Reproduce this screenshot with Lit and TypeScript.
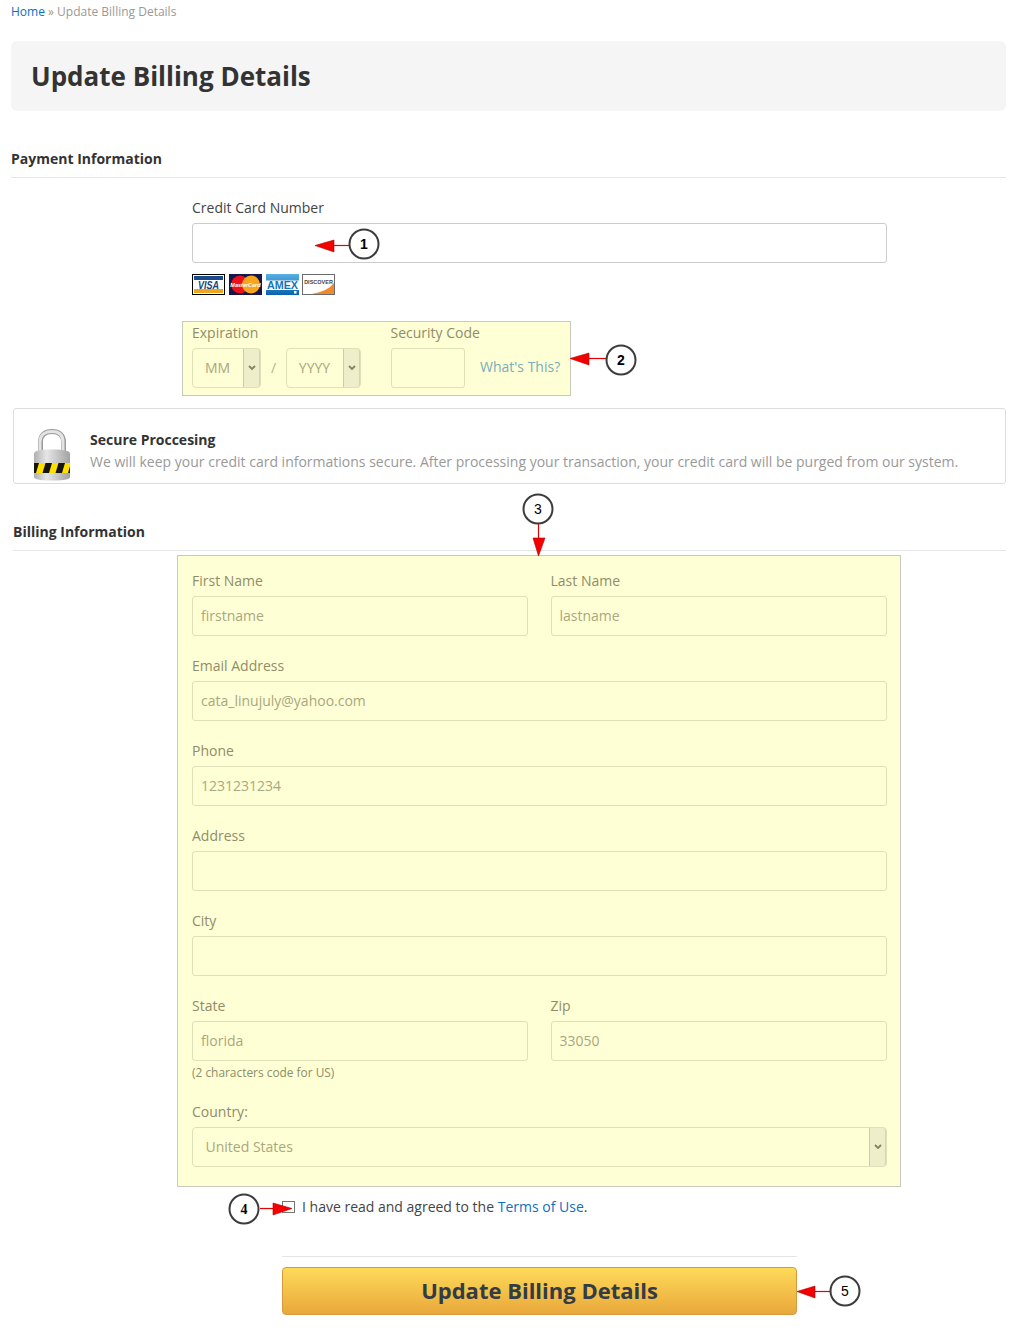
import { LitElement, html, css, svg } from "lit";
import { customElement } from "lit/decorators.js";

const chevron = html`<svg class="chev" width="8" height="6" viewBox="0 0 8 6"><path d="M1 1l3 3 3-3" fill="none" stroke="#85835a" stroke-width="1.800"/></svg>`;

const visa = html`<svg width="33" height="21" viewBox="0 0 33 21">
  <rect x="0.5" y="0.5" width="32" height="20" fill="#fff" stroke="#000"/>
  <rect x="2" y="2" width="29" height="4" fill="#1a4c8c"/>
  <rect x="2" y="15" width="29" height="4" fill="#f0a51e"/>
  <text x="16.5" y="14.500" text-anchor="middle" font-family="Liberation Sans" font-size="10.500" font-weight="700" font-style="italic" fill="#143f7c" textLength="21" lengthAdjust="spacingAndGlyphs">VISA</text>
</svg>`;
const master = html`<svg width="33" height="21" viewBox="0 0 33 21">
  <rect width="33" height="21" fill="#14174a"/>
  <circle cx="11" cy="10.5" r="9" fill="#e8111c"/>
  <circle cx="22" cy="10.5" r="9" fill="#f7a51c"/>
  <text x="16.5" y="12.500" text-anchor="middle" font-family="Liberation Sans" font-size="5.500" font-weight="700" font-style="italic" fill="#fff">MasterCard</text>
</svg>`;
const amex = html`<svg width="33" height="21" viewBox="0 0 33 21">
  <defs><linearGradient id="ax" x1="0" y1="0" x2="0" y2="1"><stop offset="0" stop-color="#58b0e4"/><stop offset="1" stop-color="#0a62ad"/></linearGradient></defs>
  <rect width="33" height="21" fill="url(#ax)"/>
  <rect y="6.500" width="33" height="9.500" fill="#fff"/>
  <text x="16.5" y="15" text-anchor="middle" font-family="Liberation Sans" font-size="11" font-weight="700" fill="#1673ba" textLength="31" lengthAdjust="spacingAndGlyphs">AMEX</text>
  <rect x="28" y="17" width="2.5" height="2.5" fill="#fff"/>
</svg>`;
const discover = html`<svg width="33" height="21" viewBox="0 0 33 21">
  <rect x="0.5" y="0.5" width="32" height="20" fill="#fff" stroke="#6b6b6b"/>
  <path d="M10 20 Q26 17 32 9 V20Z" fill="#f08a2c"/>
  <text x="16.5" y="10" text-anchor="middle" font-family="Liberation Sans" font-size="5.500" font-weight="700" fill="#444">DISCOVER</text>
</svg>`;

const lock = html`<svg width="38" height="52" viewBox="0 0 38 52">
  <defs>
    <linearGradient id="bd" x1="0" y1="0" x2="1" y2="0"><stop offset="0" stop-color="#b0b0b0"/><stop offset="0.35" stop-color="#e6e6e6"/><stop offset="1" stop-color="#a2a2a2"/></linearGradient>
    <clipPath id="bandclip"><rect x="1" y="34" width="36" height="10"/></clipPath>
  </defs>
  <path d="M7.500 26V13C7.500 6 12 2.500 19 2.500S30.500 6 30.500 13v13" fill="none" stroke="#9a9a9a" stroke-width="5"/>
  <path d="M7 26V13C7 6 12 2.500 19 2.500S30 6 30 13v13" fill="none" stroke="#e4e4e4" stroke-width="3"/>
  <path d="M1 25c0-3 4-4.500 18-4.500S37 22 37 25v23c0 2-4.500 3.500-18 3.500S1 50 1 48Z" fill="url(#bd)"/>
  <rect x="1" y="34" width="36" height="10" fill="#ffdf00"/>
  <g clip-path="url(#bandclip)" fill="#141414">
    <path d="M-3 44l3-10h6l-3 10Z"/><path d="M9.500 44l3-10h6.500l-3 10Z"/><path d="M22.500 44l3-10h6.500l-3 10Z"/><path d="M35 44l3-10h5l-3 10Z"/>
  </g>
</svg>`;

type Call = { cx: number; cy: number; n: string; cls: string; tri: string; line: [number, number, number, number] };
const calls: Call[] = [
  { cx: 364, cy: 244, n: "1", cls: "sans b", tri: "315,245.500 334,240 334,252", line: [334, 245.5, 349, 245.5] },
  { cx: 621, cy: 360, n: "2", cls: "sans b", tri: "570,358.500 589,353 589,365", line: [589, 358.5, 606, 358.5] },
  { cx: 538, cy: 509, n: "3", cls: "sans", tri: "538.500,556 533,538 545,538", line: [538.5, 524, 538.5, 538] },
  { cx: 244, cy: 1209, n: "4", cls: "serif b", tri: "292,1208.500 273,1203 273,1215", line: [260, 1208.5, 273, 1208.5] },
  { cx: 845, cy: 1291, n: "5", cls: "sans", tri: "797,1291.500 815,1286 815,1298", line: [815, 1291.5, 830, 1291.5] },
];

@customElement("app-root")
export class AppRoot extends LitElement {
  static styles = css`
    :host { display: block; position: relative; width: 1013px; height: 1330px; overflow: hidden; background: #fff; font-family: "Open Sans", sans-serif; font-size: 14px; color: #444; }
    * { box-sizing: border-box; }
    .page { padding: 0 7px 0 11px; }
    a { color: #0b6fc4; text-decoration: none; }
    .crumb { font-size: 12px; line-height: 24px; color: #999; }
    .title { margin: 17px 0 0; height: 70px; padding: 0 20px; background: #f5f5f5; border-radius: 6px; font-size: 26px; font-weight: 700; line-height: 71px; color: #333; }
    .legend { margin-top: 30px; height: 37px; line-height: 36px; font-size: 14px; font-weight: 700; color: #333; border-bottom: 1px solid #e5e5e5; }
    .legend.billing { margin-left: 2px; }
    .cc { margin: 20px 0 0 181px; width: 695px; }
    label, .lab { display: block; line-height: 20px; margin-bottom: 5px; }
    input { display: block; width: 100%; height: 40px; padding: 0 8px 2px; border: 1px solid #ccc; border-radius: 3px; background: transparent; font: 14px "Open Sans", sans-serif; color: #444; outline: none; }
    .cards { display: flex; gap: 4px; margin-top: 11px; height: 21px; }
    .cards svg { display: block; }
    .cards svg:nth-child(4) { margin-left: -1px; }

    .hl { background: #ffffd5; border: 1px solid #c9c9c0; }
    .hl label, .hl .lab { color: #8f8d6a; }
    .hl input, .hl .sel { border-color: #e0e0b8; color: #a9a780; }

    .exp { margin: 26px 0 0 171px; width: 389px; height: 75px; padding: 1px 9px 0; display: flex; }
    .exp .c1 { width: 198.500px; }
    .exp .row { display: flex; align-items: center; }
    .slash { width: 25px; text-align: center; color: #b5b38c; padding-bottom: 2px; }
    .sel { display: flex; height: 40px; border: 1px solid #e0e0b8; border-radius: 4px; }
    .sel .val { flex: 1; display: flex; align-items: center; padding-bottom: 2px; }
    .sel .btn { width: 17px; flex: none; display: flex; align-items: center; justify-content: center; background: #eeeecb; border-left: 1px solid #cfcda0; border-right: 1px solid #d6d6aa; border-radius: 0 3px 3px 0; }
    .chev { display: block; }
    .mm { width: 69px; }
    .mm .val, .yy .val { justify-content: center; padding-right: 1px; }
    .yy { width: 75px; }
    .csc { width: 74px; margin-left: 0.500px; }
    .exp .row2 { display: flex; align-items: center; gap: 15px; }
    .what { color: #78aebb; margin-bottom: 4px; }

    .secure { margin: 12px 0 0 2px; height: 76px; border: 1px solid #ddd; border-radius: 3px; display: flex; padding: 20px 0 0 19px; }
    .secure svg { display: block; flex: none; }
    .secure .txt { margin-left: 19px; }
    .secure .hd { font-weight: 700; color: #333; line-height: 22px; }
    .secure .ds { color: #999; line-height: 22px; white-space: nowrap; }

    .billform { margin: 4px 0 0 166px; width: 724px; height: 632px; padding: 15px 13px 0 14px; }
    .two { display: grid; grid-template-columns: 336px 336px; column-gap: 22.500px; }
    .f { margin-bottom: 20px; }
    .help { font-size: 11.900px; line-height: 20px; color: #8f8d6a; margin: 1px 0 20px; }
    .f.nomb { margin-bottom: 0; }
    .country .val { padding-left: 12.500px; }

    .terms { margin: 10px 0 0 271px; height: 20px; display: flex; align-items: center; gap: 7px; line-height: 20px; }
    .box { width: 13px; height: 12px; border: 1px solid #767676; background: #fff; flex: none; }
    .hr { margin: 39px 0 0 271px; width: 515px; height: 1px; background: #e5e5e5; }
    .go { margin: 10px 0 0 271px; width: 515px; height: 48px; display: block; border: 1px solid #d49a3c; border-radius: 4px; background: linear-gradient(#feda59, #e9a83b); font: 700 22px "Open Sans", sans-serif; color: #333b45; text-align: center; padding: 0 0 2px; }

    .notes { position: absolute; left: 0; top: 0; pointer-events: none; }
    .notes text { font-size: 14px; text-anchor: middle; fill: #000; }
    .sans { font-family: "Liberation Sans", sans-serif; }
    .serif { font-family: "Liberation Serif", serif; }
    .b { font-weight: 700; }
  `;

  private field(label: string, value = "") {
    return html`<div class="f"><label>${label}</label><input readonly .value=${value} /></div>`;
  }

  render() {
    return html`
      <div class="page">
        <div class="crumb"><a href="#">Home</a> » Update Billing Details</div>
        <h1 class="title">Update Billing Details</h1>

        <div class="legend">Payment Information</div>
        <div class="cc">
          <label>Credit Card Number</label>
          <input readonly />
          <div class="cards">${visa}${master}${amex}${discover}</div>
        </div>

        <div class="exp hl">
          <div class="c1">
            <div class="lab">Expiration</div>
            <div class="row">
              <div class="sel mm"><span class="val">MM</span><span class="btn">${chevron}</span></div>
              <span class="slash">/</span>
              <div class="sel yy"><span class="val">YYYY</span><span class="btn">${chevron}</span></div>
            </div>
          </div>
          <div class="c2">
            <div class="lab">Security Code</div>
            <div class="row2"><input class="csc" readonly /><a class="what" href="#">What's This?</a></div>
          </div>
        </div>

        <div class="secure">
          ${lock}
          <div class="txt">
            <div class="hd">Secure Proccesing</div>
            <div class="ds">We will keep your credit card informations secure. After processing your transaction, your credit card will be purged from our system.</div>
          </div>
        </div>

        <div class="legend billing">Billing Information</div>
        <div class="billform hl">
          <div class="two">${this.field("First Name", "firstname")}${this.field("Last Name", "lastname")}</div>
          ${this.field("Email Address", "cata_linujuly@yahoo.com")}
          ${this.field("Phone", "1231231234")}
          ${this.field("Address")}
          ${this.field("City")}
          <div class="two">
            <div class="f nomb"><label>State</label><input readonly .value=${"florida"} /><div class="help">(2 characters code for US)</div></div>
            ${this.field("Zip", "33050")}
          </div>
          <div class="country">
            <label>Country:</label>
            <div class="sel"><span class="val">United States</span><span class="btn">${chevron}</span></div>
          </div>
        </div>

        <div class="terms"><span class="box"></span><span>I have read and agreed to the <a href="#">Terms of Use</a>.</span></div>
        <div class="hr"></div>
        <button class="go">Update Billing Details</button>
      </div>

      <svg class="notes" width="1013" height="1330" viewBox="0 0 1013 1330">
        ${calls.map(
          (c) => svg`
            <line x1=${c.line[0]} y1=${c.line[1]} x2=${c.line[2]} y2=${c.line[3]} stroke="#e60000" stroke-width="1.200"/>
            <polygon points=${c.tri} fill="#f40000" stroke="#b00000" stroke-width="0.600"/>
            <circle cx=${c.cx} cy=${c.cy} r="14.500" fill="#fff" stroke="#3c3c3c" stroke-width="2"/>
            <text class=${c.cls} x=${c.cx} y=${c.cy + 5}>${c.n}</text>`
        )}
      </svg>
    `;
  }
}
